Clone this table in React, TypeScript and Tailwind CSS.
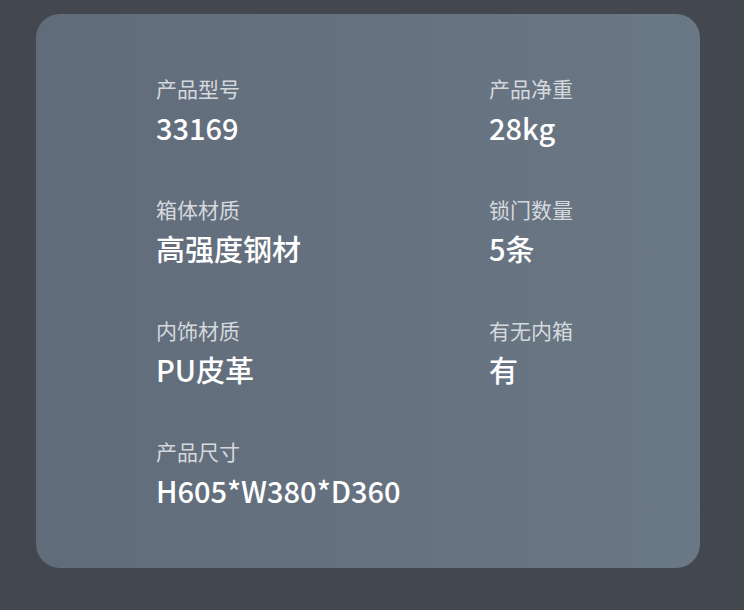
const specs = [
  { label: '产品型号', value: '33169' },
  { label: '产品净重', value: '28kg' },
  { label: '箱体材质', value: '高强度钢材' },
  { label: '锁门数量', value: '5条' },
  { label: '内饰材质', value: 'PU皮革' },
  { label: '有无内箱', value: '有' },
  { label: '产品尺寸', value: 'H605*W380*D360' },
];

export default function App() {
  return (
    <div
      className="w-[744px] h-[610px] bg-[#43474f] pt-[14px] pl-[36px]"
      style={{ fontFamily: '"Noto Sans CJK SC", "Noto Sans", sans-serif' }}
    >
      <div className="w-[664px] h-[554px] rounded-[24px] bg-gradient-to-r from-[#616c7a] to-[#6a7785] pl-[120px] pt-[64px]">
        <div className="grid grid-cols-[333px_1fr] gap-y-[57px]">
          {specs.map((s) => (
            <div key={s.label} className="flex flex-col">
              <span className="text-[21px] leading-none text-[#d5d9de]">{s.label}</span>
              <span className="mt-[14px] text-[29px] leading-none font-medium text-white">{s.value}</span>
            </div>
          ))}
        </div>
      </div>
    </div>
  );
}
